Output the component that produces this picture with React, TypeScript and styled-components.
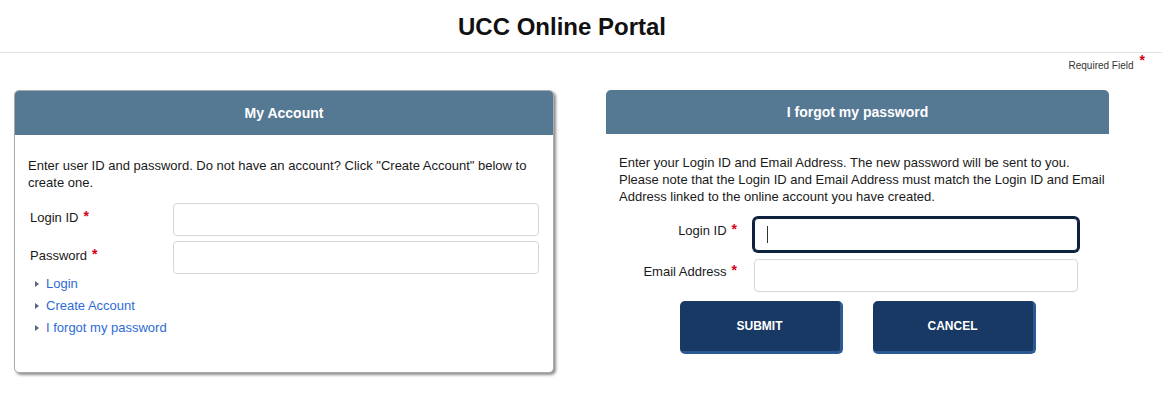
import styled, { createGlobalStyle } from "styled-components";

const GlobalStyle = createGlobalStyle`
  body {
    margin: 0;
    background: #ffffff;
    font-family: Arial, "Liberation Sans", sans-serif;
    color: #222;
  }
  * {
    box-sizing: border-box;
  }
`;

const Page = styled.div`
  width: 1162px;
  min-height: 409px;
`;

const TopBar = styled.header`
  height: 53px;
  border-bottom: 1px solid #e3e3e3;
  display: flex;
  align-items: center;
  justify-content: center;
  padding-right: 38px;
`;

const Title = styled.h1`
  margin: 0;
  font-size: 24px;
  font-weight: bold;
  color: #111;
  padding-top: 1px;
`;

const RequiredRow = styled.div`
  height: 37px;
  padding: 7px 17px 0 0;
  display: flex;
  justify-content: flex-end;
  align-items: flex-start;
  font-size: 10px;
  color: #333;
`;

const RequiredStar = styled.span`
  color: #d4001a;
  font-weight: bold;
  font-size: 14px;
  line-height: 10px;
  margin-left: 6px;
  position: relative;
  top: -5px;
`;

const Columns = styled.div`
  display: flex;
  align-items: flex-start;
  padding-left: 14px;
`;

const Card = styled.section`
  width: 540px;
  border: 1px solid #a9a9a9;
  border-radius: 5px;
  box-shadow: 2px 2px 3px rgba(0, 0, 0, 0.45);
  overflow: hidden;
  background: #fff;
`;

const PanelHead = styled.div<{ $h: number }>`
  height: ${(p) => p.$h}px;
  background: #557893;
  color: #fff;
  font-weight: bold;
  font-size: 14px;
  display: flex;
  align-items: center;
  justify-content: center;
`;

const CardBody = styled.div`
  padding: 22px 14px 34px 13px;
`;

const Intro = styled.p`
  margin: 0 0 12px;
  font-size: 13px;
  line-height: 17px;
  color: #1a1a1a;
`;

const LoginGrid = styled.div`
  display: grid;
  grid-template-columns: 145px 1fr;
  row-gap: 5px;
`;

const Label = styled.label<{ $right?: boolean }>`
  font-size: 13px;
  line-height: 17px;
  padding-top: ${(p) => (p.$right ? 4 : 6)}px;
  padding-left: ${(p) => (p.$right ? 0 : 2)}px;
  padding-right: ${(p) => (p.$right ? 4 : 0)}px;
  text-align: ${(p) => (p.$right ? "right" : "left")};
  color: #1a1a1a;
`;

const Star = styled.span`
  color: #d4001a;
  font-weight: bold;
  font-size: 14px;
  margin-left: 5px;
  position: relative;
  top: -1px;
`;

const Field = styled.div`
  position: relative;
`;

const TextInput = styled.input<{ $active?: boolean }>`
  display: block;
  width: 100%;
  height: 33px;
  border: 1px solid ${(p) => (p.$active ? "#0e2240" : "#d3d6db")};
  box-shadow: ${(p) => (p.$active ? "0 0 0 2px #0e2240" : "none")};
  border-radius: 4px;
  background: #fff;
  outline: none;
  font-size: 13px;
  padding: 0 12px;
`;

const Caret = styled.span`
  position: absolute;
  left: 13px;
  top: 8px;
  width: 1px;
  height: 17px;
  background: #333;
`;

const LinkList = styled.ul`
  list-style: none;
  margin: -2px 0 0;
  padding: 0 0 0 7px;
`;

const LinkItem = styled.li`
  display: flex;
  align-items: center;
  height: 22px;
  font-size: 13px;
`;

const Arrow = styled.span`
  width: 0;
  height: 0;
  border-left: 4px solid #56667f;
  border-top: 3.5px solid transparent;
  border-bottom: 3.5px solid transparent;
  margin: 2px 7px 0 0;
`;

const TextLink = styled.a`
  color: #2e6bd6;
  text-decoration: none;
`;

const Panel = styled.section`
  width: 503px;
  margin-left: 52px;
`;

const PanelHeadTop = styled(PanelHead)`
  border-radius: 5px 5px 0 0;
`;

const PanelBody = styled.div`
  padding: 20px 0 0 13px;
`;

const ForgotGrid = styled.div`
  display: grid;
  grid-template-columns: 122px 324px;
  column-gap: 13px;
  row-gap: 8px;
  margin-top: 13px;
`;

const ButtonRow = styled.div`
  display: flex;
  justify-content: center;
  gap: 30px;
  margin: 9px 0 0 -13px;
`;

const ActionButton = styled.button`
  width: 163px;
  height: 53px;
  background: #173963;
  border: none;
  border-right: 3px solid #2a5993;
  border-bottom: 3px solid #2a5993;
  border-radius: 5px;
  color: #fff;
  font-family: Arial, "Liberation Sans", sans-serif;
  font-weight: bold;
  font-size: 12px;
  padding: 0;
  cursor: pointer;
`;

function App() {
  return (
    <Page>
      <GlobalStyle />
      <TopBar>
        <Title>UCC Online Portal</Title>
      </TopBar>
      <RequiredRow>
        Required Field<RequiredStar>*</RequiredStar>
      </RequiredRow>
      <Columns>
        <Card>
          <PanelHead $h={44}>My Account</PanelHead>
          <CardBody>
            <Intro>
              Enter user ID and password. Do not have an account? Click "Create
              Account" below to create one.
            </Intro>
            <LoginGrid>
              <Label>
                Login ID<Star>*</Star>
              </Label>
              <TextInput type="text" />
              <Label>
                Password<Star>*</Star>
              </Label>
              <TextInput type="password" />
            </LoginGrid>
            <LinkList>
              {["Login", "Create Account", "I forgot my password"].map((t) => (
                <LinkItem key={t}>
                  <Arrow />
                  <TextLink href="#">{t}</TextLink>
                </LinkItem>
              ))}
            </LinkList>
          </CardBody>
        </Card>
        <Panel>
          <PanelHeadTop $h={44}>I forgot my password</PanelHeadTop>
          <PanelBody>
            <Intro>
              Enter your Login ID and Email Address. The new password will be
              sent to you.
              <br />
              Please note that the Login ID and Email Address must match the
              Login ID and Email Address linked to the online account you have
              created.
            </Intro>
            <ForgotGrid>
              <Label $right>
                Login ID<Star>*</Star>
              </Label>
              <Field>
                <TextInput type="text" $active />
                <Caret />
              </Field>
              <Label $right>
                Email Address<Star>*</Star>
              </Label>
              <TextInput type="text" />
            </ForgotGrid>
            <ButtonRow>
              <ActionButton>SUBMIT</ActionButton>
              <ActionButton>CANCEL</ActionButton>
            </ButtonRow>
          </PanelBody>
        </Panel>
      </Columns>
    </Page>
  );
}

export default App;
